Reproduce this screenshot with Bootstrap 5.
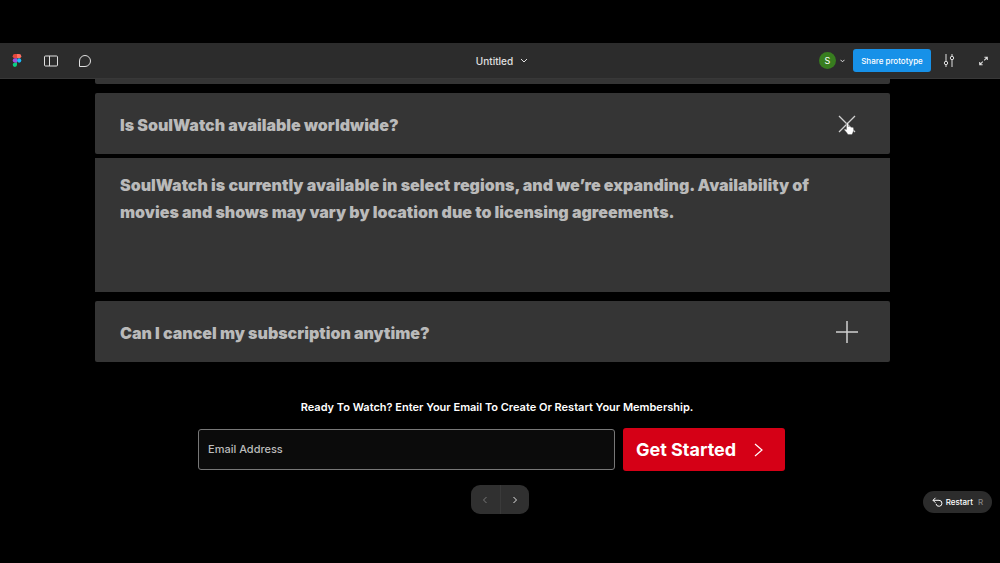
<!DOCTYPE html>
<html lang="en">
<head>
<meta charset="utf-8">
<meta name="viewport" content="width=device-width, initial-scale=1">
<title>Untitled prototype</title>
<link href="https://cdn.jsdelivr.net/npm/bootstrap@5.3.0/dist/css/bootstrap.min.css" rel="stylesheet">
<style>
body { background: #000; color: #fff; font-family: Inter, "Liberation Sans", sans-serif; padding-top: 43px; }
svg { display: block; fill: none; stroke: currentColor; }
button { color: inherit; }
.plain { background: none; border: 0; padding: 0; color: #e0e0e0; }
.toolbar { background: #2c2c2c; height: 36px; border-bottom: 1px solid #383838; padding: 0 12px 0 11px; }
.tools { flex: 1 1 0; gap: 21px; }
.doc-title { font-size: 10px; font-weight: 500; line-height: 16px; gap: 7px; padding-left: 5px; }
.avatar { width: 17px; height: 17px; background: #387d1f; font-size: 9px; line-height: 17px; }
.share { background: #1791e8; border-radius: 3px; border: 0; color: #fff; font-size: 8px; font-weight: 500; width: 78px; height: 23px; padding: 0; margin-left: 8px; }
.faq { width: 79.5%; margin-left: 9.5%; color: #bababa; font-size: 16px; line-height: 27px; font-weight: 900; }
.faq-row { background: #353535; border-radius: 2px; }
.faq-peek { height: 5px; margin-bottom: 9px; border-radius: 0 0 2px 2px; }
.faq-question { width: 100%; height: 61px; border: 0; padding: 3px 26px 0 25px; font-weight: 900; text-align: left; }
.faq-question h2 { font: inherit; margin: 0; }
.faq-icon { width: 34px; display: flex; justify-content: center; color: #d0d0d0; padding-bottom: 2px; }
.faq-answer { min-height: 134px; margin: 4px 0 9px; padding: 14px 25px; border-radius: 0; }
.faq-answer p { margin: 0; max-width: 720px; }
.signup { width: 58.7%; margin: 37px 0 0 19.8%; }
.signup-lead { font-size: 11px; line-height: 16px; font-weight: 600; margin: 0 0 13px; padding-left: 11px; }
.email { background: #0b0b0b; border: 1px solid #777; border-radius: 3px; color: #ddd; font-size: 11px; font-weight: 500; line-height: 16px; height: 41px; padding: 0 9px 2px; min-width: 0; flex: 1 1 0; }
.email::placeholder { color: #bcbcbc; opacity: 1; }
.start { background: #d50016; border: 0; border-radius: 3px; color: #fff; width: 162px; height: 43px; padding: 0 21px 0 13px; font-size: 18px; line-height: 24px; font-weight: 700; }
.bottom-bar { display: grid; grid-template-columns: 1fr auto 1fr; margin-top: 14px; }
.pager { background: #303030; border-radius: 9px; width: 58px; height: 29px; overflow: hidden; }
.pager button { flex: 1; display: grid; place-items: center; }
.pager button:first-child { color: #777; border-right: 1px solid #3a3a3a; }
.restart { background: #2c2c2c; border: 0; border-radius: 11px; width: 69px; height: 22px; padding: 0 8px; margin-top: 6px; font-size: 8px; font-weight: 500; gap: 3px; }
.key { color: #858585; margin-left: 2px; }
.pointer { position: absolute; left: 6px; top: 7px; }
</style>
<script src="https://cdn.jsdelivr.net/npm/bootstrap@5.3.0/dist/js/bootstrap.bundle.min.js"></script>
</head>
<body>
<header class="toolbar d-flex align-items-center">
  <div class="tools d-flex align-items-center">
    <button class="plain" aria-label="Figma home">
      <svg width="12" height="15" viewBox="1 0 10 14" preserveAspectRatio="xMidYMid meet"><g stroke="none"><path fill="#e5483d" d="M6 1H4a2 2 0 0 0 0 4h2z"/><path fill="#ff6f61" d="M6 1h2a2 2 0 0 1 0 4H6z"/><path fill="#9b51e0" d="M6 5H4a2 2 0 0 0 0 4h2z"/><circle cx="8" cy="7" r="2" fill="#1abcfe"/><path fill="#0acf83" d="M6 9H4a2 2 0 1 0 2 2z"/></g></svg>
    </button>
    <button class="plain" aria-label="Toggle sidebar">
      <svg width="14" height="12" viewBox="0 0 14 12"><rect x=".5" y="1" width="13" height="10" rx="1"/><path d="M5.500 1v10"/></svg>
    </button>
    <button class="plain" aria-label="Comments">
      <svg width="12" height="12" viewBox="0 0 12 12"><path d="M.5 11.500V6A5.500 5.500 0 1 1 6 11.500z" stroke-linejoin="round"/></svg>
    </button>
  </div>
  <button class="plain doc-title d-flex align-items-center"><span>Untitled</span><svg width="8" height="5" viewBox="0 0 8 5"><path d="M1 1l3 3 3-3"/></svg></button>
  <div class="tools d-flex align-items-center justify-content-end gap-0">
    <span class="avatar rounded-circle text-center">S</span>
    <button class="plain ms-1" aria-label="Account menu"><svg width="5" height="4" viewBox="0 0 5 4"><path d="M.5.8l2 2 2-2"/></svg></button>
    <button class="share">Share prototype</button>
    <button class="plain ms-2 ps-1" aria-label="Options"><svg width="12" height="13" viewBox="0 0 12 13"><path d="M3 0v7M3 11v2M9 0v2M9 6v7"/><circle cx="3" cy="9" r="1.700"/><circle cx="9" cy="4" r="1.700"/></svg></button>
    <button class="plain ms-4" aria-label="Full screen"><svg width="9" height="10" viewBox="0 0 10 10"><path d="M6 .8h3.200V4M9 1L5.800 4.200M4 9.200H.8V6M1 9l3.200-3.200" stroke-width="1.200"/></svg></button>
  </div>
</header>

<main>
  <section class="faq">
    <div class="faq-row faq-peek"></div>
    <button class="faq-row faq-question d-flex align-items-center justify-content-between" aria-expanded="true" aria-controls="answer">
      <h2>Is SoulWatch available worldwide?</h2>
      <span class="faq-icon position-relative"><svg width="18" height="18" viewBox="0 0 18 18"><path d="M1 1l16 16M17 1L1 17" stroke-width="1.300"/></svg>
        <svg class="pointer ms-2" width="10" height="13" viewBox="0 0 10 13"><path fill="#fff" stroke="#555" stroke-width=".4" d="M2.500 1.200Q3.500 0 4.300 1.200V4.500Q5.500 3.800 6 5q1-.7 1.600.4Q9 4.800 9.500 6v2.800Q9 10.500 8 12.500H4Q2.500 10 .4 8 0 6.500 2.500 7.500z"/></svg>
      </span>
    </button>
    <div class="faq-row faq-answer" id="answer">
      <p>SoulWatch is currently available in select regions, and we’re expanding. Availability of movies and shows may vary by location due to licensing agreements.</p>
    </div>
    <button class="faq-row faq-question d-flex align-items-center justify-content-between" aria-expanded="false">
      <h2>Can I cancel my subscription anytime?</h2>
      <span class="faq-icon"><svg width="24" height="24" viewBox="0 0 24 24"><path d="M12 1v22M1 12h22" stroke-width="1.500"/></svg></span>
    </button>
  </section>

  <form class="signup">
    <p class="signup-lead text-center"><label for="email">Ready To Watch? Enter Your Email To Create Or Restart Your Membership.</label></p>
    <div class="d-flex gap-2 align-items-center">
      <input class="email" id="email" type="email" placeholder="Email Address">
      <button class="start d-flex align-items-center justify-content-between" type="button"><span>Get Started</span><svg width="11" height="14" viewBox="0 0 11 14"><path d="M2 1l7 6-7 6" stroke-width="1.200"/></svg></button>
    </div>
  </form>
</main>

<footer class="bottom-bar">
  <span></span>
  <div class="pager d-flex">
    <button class="plain" aria-label="Previous"><svg width="6" height="8" viewBox="0 0 6 8"><path d="M4.500 1l-3 3 3 3"/></svg></button>
    <button class="plain" aria-label="Next"><svg width="6" height="8" viewBox="0 0 6 8"><path d="M1.500 1l3 3-3 3"/></svg></button>
  </div>
  <button class="restart d-flex align-items-center justify-content-center ms-auto me-2"><svg width="11" height="10" viewBox="0 0 11 10"><path d="M3.500.8L1 3.300l2.500 2.500M1 3.300h6a3 3 0 1 1-3 3.500"/></svg><span>Restart</span><span class="key">R</span></button>
</footer>
</body>
</html>
